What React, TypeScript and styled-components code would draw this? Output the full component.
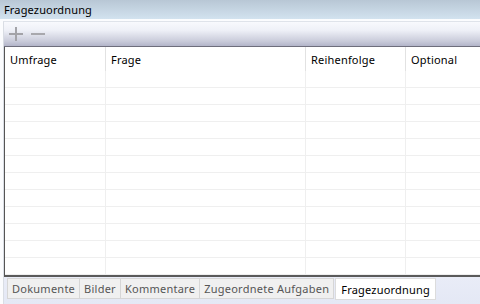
import React from "react";
import styled, { createGlobalStyle } from "styled-components";

const Global = createGlobalStyle`
  html, body { margin: 0; padding: 0; }
  body { width: 480px; height: 304px; overflow: hidden; background: #ffffff;
    font-family: "Noto Sans", "Open Sans", sans-serif; }
`;

const Frame = styled.div`
  width: 480px; height: 304px; display: flex; flex-direction: column; background: #fbfcfe;
`;

const TitleBar = styled.div`
  height: 19px; flex: none; display: flex; align-items: center; padding-left: 4px;
  background: linear-gradient(#b8c7d5, #d2e2ef);
  font-size: 11px; letter-spacing: 0.15px; color: #000; line-height: 19px;
`;

const Panel = styled.div`
  flex: 1; display: flex; flex-direction: column; margin: 2px 0 0 3px;
  border-top: 1px solid #dfe3ea; border-left: 1px solid #d9dde4; min-height: 0;
`;

const Toolbar = styled.div`
  height: 24px; flex: none; display: flex; align-items: center; gap: 6px; padding-left: 4px;
  background: linear-gradient(#f8f9fd 0%, #eef0f7 35%, #c9cbda 80%, #b3b5c9 100%);
  border-bottom: 1px solid #6e6e7c;
`;

const ToolIcon = styled.svg`
  width: 16px; height: 16px; display: block;
`;

const Table = styled.div`
  flex: none; display: grid; grid-template-columns: 101px 200px 100px 1fr;
  border-left: 1px solid #555; border-bottom: 2px solid #5a5a5a; background: #fff;
`;

const HeadCell = styled.div<{ $last?: boolean }>`
  height: 24px; display: flex; align-items: center; padding-left: 5px;
  font-size: 11px; letter-spacing: 0.2px; color: #000;
  box-shadow: ${p => (p.$last ? "none" : "inset -1px 0 0 #e2e2e2")};
`;

const Cell = styled.div<{ $last?: boolean }>`
  height: 16px; border-bottom: 1px solid #efefef;
  border-right: ${p => (p.$last ? "none" : "1px solid #efefef")};
`;

const TabBar = styled.div`
  flex: 1; display: flex; align-items: flex-start; padding: 1px 0 0 3px;
  background: linear-gradient(#e9ecf7, #e4e8f5);
`;

const Tab = styled.div<{ $active?: boolean }>`
  flex: none; white-space: nowrap; box-sizing: border-box;
  height: ${p => (p.$active ? "22px" : "21px")};
  display: flex; align-items: center; padding: 0 ${p => (p.$active ? "5px" : "4px")};
  font-size: 11px; letter-spacing: ${p => (p.$active ? "0.2px" : "0.25px")};
  color: ${p => (p.$active ? "#000" : "#555")};
  background: ${p => (p.$active ? "#ffffff" : "#f0f0f0")};
  border: 1px solid ${p => (p.$active ? "#dcdcdc" : "#d6d6d6")};
  border-left: ${p => (p.$active ? "1px solid #dcdcdc" : "none")};
  margin-left: ${p => (p.$active ? "1px" : "0")};
  &:first-child { border-left: 1px solid #d6d6d6; }
`;

const columns = ["Umfrage", "Frage", "Reihenfolge", "Optional"];
const rows = Array.from({ length: 12 });
const tabs = ["Dokumente", "Bilder", "Kommentare", "Zugeordnete Aufgaben"];

export default function App() {
  return (
    <>
      <Global />
      <Frame>
        <TitleBar>Fragezuordnung</TitleBar>
        <Panel>
          <Toolbar>
            <ToolIcon viewBox="0 0 16 16">
              <rect x="1" y="7" width="14" height="2" fill="#a3a3a8" />
              <rect x="7" y="1" width="2" height="14" fill="#a3a3a8" />
            </ToolIcon>
            <ToolIcon viewBox="0 0 16 16">
              <rect x="1" y="7" width="14" height="2" fill="#a8a8ad" />
            </ToolIcon>
          </Toolbar>
          <Table>
            {columns.map((c, i) => (
              <HeadCell key={c} $last={i === columns.length - 1}>{c}</HeadCell>
            ))}
            {rows.map((_, r) =>
              columns.map((c, i) => <Cell key={r + c} $last={i === columns.length - 1} />)
            )}
          </Table>
          <TabBar>
            {tabs.map(t => <Tab key={t}>{t}</Tab>)}
            <Tab $active>Fragezuordnung</Tab>
          </TabBar>
        </Panel>
      </Frame>
    </>
  );
}
